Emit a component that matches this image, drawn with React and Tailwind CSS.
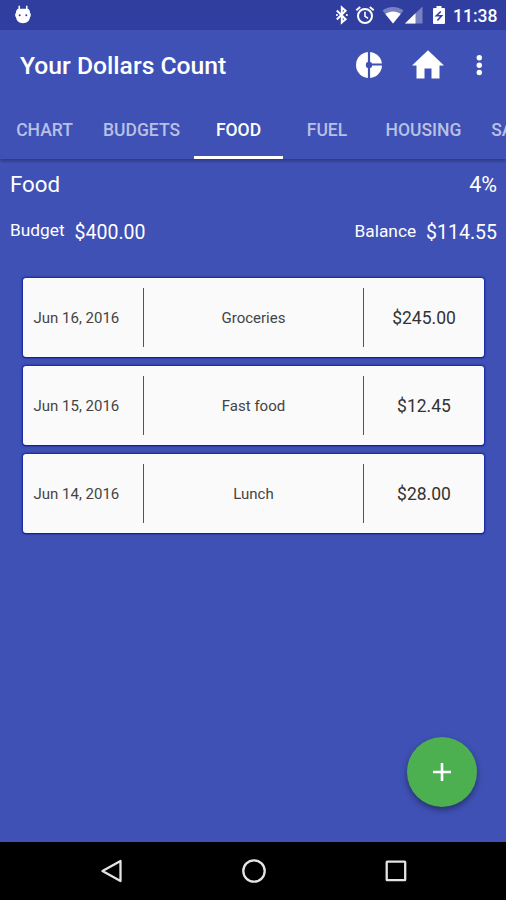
const tabs = [
  { label: 'CHART', width: 'w-[89px]' },
  { label: 'BUDGETS', width: 'w-[105px]' },
  { label: 'FOOD', width: 'w-[89px]', active: true },
  { label: 'FUEL', width: 'w-[88px]' },
  { label: 'HOUSING', width: 'w-[105px]' },
  { label: 'SAVINGS', width: 'w-[103px]' },
]

const expenses = [
  { date: 'Jun 16, 2016', name: 'Groceries', amount: '$245.00' },
  { date: 'Jun 15, 2016', name: 'Fast food', amount: '$12.45' },
  { date: 'Jun 14, 2016', name: 'Lunch', amount: '$28.00' },
]

function StatusBar() {
  return (
    <div className="flex h-[30px] shrink-0 items-center bg-[#303f9f] pl-[14px] pr-[9px] text-white">
      <svg className="h-[20px] w-[18px]" viewBox="0 0 18 20">
        <path d="M5.2 1.2v4M12.8 1.2v4" stroke="#fff" strokeWidth="1.5" strokeLinecap="round" />
        <path d="M4 3.8h10c1.5 1 2 2.5 2.1 4.2.9.3 1 3.500 0 4C15.600 15.800 13 18.200 9 18.200S2.400 15.800 1.900 12c-1-.5-.9-3.700 0-4C2 6.300 2.500 4.800 4 3.800z" fill="#fff" />
        <circle cx="5.700" cy="10.300" r="1" fill="#303f9f" />
        <circle cx="12.300" cy="10.300" r="1" fill="#303f9f" />
      </svg>
      <svg className="ml-auto h-[20px] w-[14px]" viewBox="0 0 14 20" fill="none" stroke="#fff" strokeWidth="2">
        <path d="M1.800 5.500l8.800 8.800L6.800 17.500v-15l3.800 3.200-8.800 8.800" />
        <path d="M1.900 10h.1M11.800 10h.1" strokeWidth="2" strokeLinecap="round" />
      </svg>
      <svg className="ml-[6px] h-[20px] w-[20px]" viewBox="0 0 20 20" fill="none" stroke="#fff">
        <circle cx="10" cy="11" r="7" strokeWidth="2" />
        <path d="M10 6.800v4.600l3 1.800" strokeWidth="1.600" />
        <path d="M1.300 5.200l3.900-3.300M18.700 5.200l-3.900-3.300" strokeWidth="1.900" />
      </svg>
      <svg className="ml-[7px] h-[18px] w-[22px]" viewBox="0 0 22 18" fill="#fff">
        <path d="M11 17.500L.5 4.500C3.500 2.200 7 1 11 1s7.500 1.200 10.500 3.500z" opacity=".35" />
        <path d="M11 17.500L3.300 8C5.500 6.300 8 5.400 11 5.400s5.500.9 7.700 2.600z" />
      </svg>
      <svg className="ml-[1px] h-[18px] w-[18px]" viewBox="0 0 18 18" fill="#fff">
        <path d="M0 17.500L17.500.5v17z" opacity=".35" />
        <path d="M0 17.500L10.500 7.300v10.200z" />
      </svg>
      <svg className="ml-[9px] h-[20px] w-[14px]" viewBox="0 0 14 20">
        <path d="M4.500 1h5v2H12a1 1 0 0 1 1 1v14a1 1 0 0 1-1 1H2a1 1 0 0 1-1-1V4a1 1 0 0 1 1-1h2.500z" fill="#fff" />
        <path d="M8.800 6.500L4.400 10.800h5.200L5.400 15.500" fill="none" stroke="#303f9f" strokeWidth="1.600" />
      </svg>
      <span className="mt-[2px] ml-[7px] w-[44px] whitespace-nowrap text-[17.500px] leading-[30px] font-medium">11:38</span>
    </div>
  )
}

function Toolbar() {
  return (
    <div className="flex h-[71px] items-center pr-[18px] pl-5">
      <h1 className="text-[24.700px] font-medium">Your Dollars Count</h1>
      <svg className="mb-[2px] ml-auto h-[28px] w-[28px]" viewBox="0 0 28 28">
        <circle cx="14" cy="14" r="13" fill="#fff" />
        <circle cx="14" cy="14" r="3.200" fill="#3f51b5" />
        <path d="M14 0v28M14 13.500h14" stroke="#3f51b5" strokeWidth="2.200" />
      </svg>
      <svg className="mb-[2px] ml-[28px] h-[30px] w-[34px]" viewBox="0 0 34 30" fill="#fff">
        <path d="M17 .3L1 15.400h4.500V28.500h8V18.500h7v10h8V15.400H33z" />
      </svg>
      <svg className="ml-[25px] h-[28px] w-[18px]" viewBox="0 0 18 28" fill="#fff">
        <circle cx="9.300" cy="5.800" r="2.700" />
        <circle cx="9.300" cy="13.200" r="2.700" />
        <circle cx="9.300" cy="20.500" r="2.700" />
      </svg>
    </div>
  )
}

function Tabs() {
  return (
    <div className="flex h-[58px] overflow-hidden">
      {tabs.map((tab) => (
        <div
          key={tab.label}
          className={`flex shrink-0 items-center justify-center border-b-[3px] pt-[3px] text-[17.500px] font-medium ${tab.width} ${
            tab.active ? 'border-white text-white' : 'border-transparent text-[#b9c0e6]'
          }`}
        >
          {tab.label}
        </div>
      ))}
    </div>
  )
}

function Summary() {
  return (
    <div className="pr-[9px] pl-[10px] text-white">
      <div className="flex h-[50px] items-center justify-between pt-px text-[22.300px]">
        <span>Food</span>
        <span className="pt-px text-[21.500px]">4%</span>
      </div>
      <div className="flex h-[46px] items-center text-[19.500px]">
        <span className="mr-[10px] -mt-[3px] text-[17.300px]">Budget</span>
        <span className="pt-px">$400.00</span>
        <span className="mr-[10px] ml-auto text-[17.300px]">Balance</span>
        <span className="pt-px">$114.55</span>
      </div>
    </div>
  )
}

function ExpenseCard({ date, name, amount }) {
  return (
    <div className="flex h-[79px] items-center rounded-[3px] bg-[#fafafa] text-[15px] text-[#444] shadow-[0_0_2px_1px_#1424a0,0_1px_1px_#0c1a90]">
      <div className="w-[120px] pt-[2px] pl-[10.500px]">{date}</div>
      <div className="flex h-[59px] flex-1 items-center justify-center border-x border-[#555] pt-[2px]">{name}</div>
      <div className="w-[120px] pt-[2px] text-center text-[17.500px] text-[#333]">{amount}</div>
    </div>
  )
}

function NavBar() {
  return (
    <div className="flex h-[58px] shrink-0 items-center justify-between bg-black pr-[97px] pl-[99px]">
      <svg className="h-[26px] w-[26px]" viewBox="0 0 26 26" fill="none" stroke="#e4e4e4" strokeWidth="2.300">
        <path d="M3.500 13L21.500 3v20z" strokeLinejoin="round" />
      </svg>
      <svg className="h-[26px] w-[26px]" viewBox="0 0 26 26" fill="none" stroke="#e4e4e4" strokeWidth="2.300">
        <circle cx="13" cy="13" r="10.700" />
      </svg>
      <svg className="h-[26px] w-[26px]" viewBox="0 0 26 26" fill="none" stroke="#e4e4e4" strokeWidth="2.300">
        <rect x="3.700" y="3.700" width="18.500" height="18.500" rx=".5" />
      </svg>
    </div>
  )
}

export default function App() {
  return (
    <div className="relative flex h-[900px] w-[506px] flex-col overflow-hidden bg-[#3f51b5] font-[Roboto,sans-serif]">
      <StatusBar />
      <header className="shrink-0 text-white shadow-[0_2px_3px_rgba(0,0,0,0.3)]">
        <Toolbar />
        <Tabs />
      </header>
      <main className="flex-1">
        <Summary />
        <div className="mt-[23px] flex flex-col gap-[9px] pr-[22px] pl-[23px]">
          {expenses.map((expense) => (
            <ExpenseCard key={expense.date} {...expense} />
          ))}
        </div>
      </main>
      <button className="absolute right-[29.500px] bottom-[93px] flex h-[70px] w-[70px] items-center justify-center rounded-full bg-[#4caf50] shadow-[0_3px_6px_rgba(0,0,0,0.4)]">
        <svg className="h-[18px] w-[18px]" viewBox="0 0 18 18" stroke="#fff" strokeWidth="2.600">
          <path d="M9 0v18M0 9h18" />
        </svg>
      </button>
      <NavBar />
    </div>
  )
}
